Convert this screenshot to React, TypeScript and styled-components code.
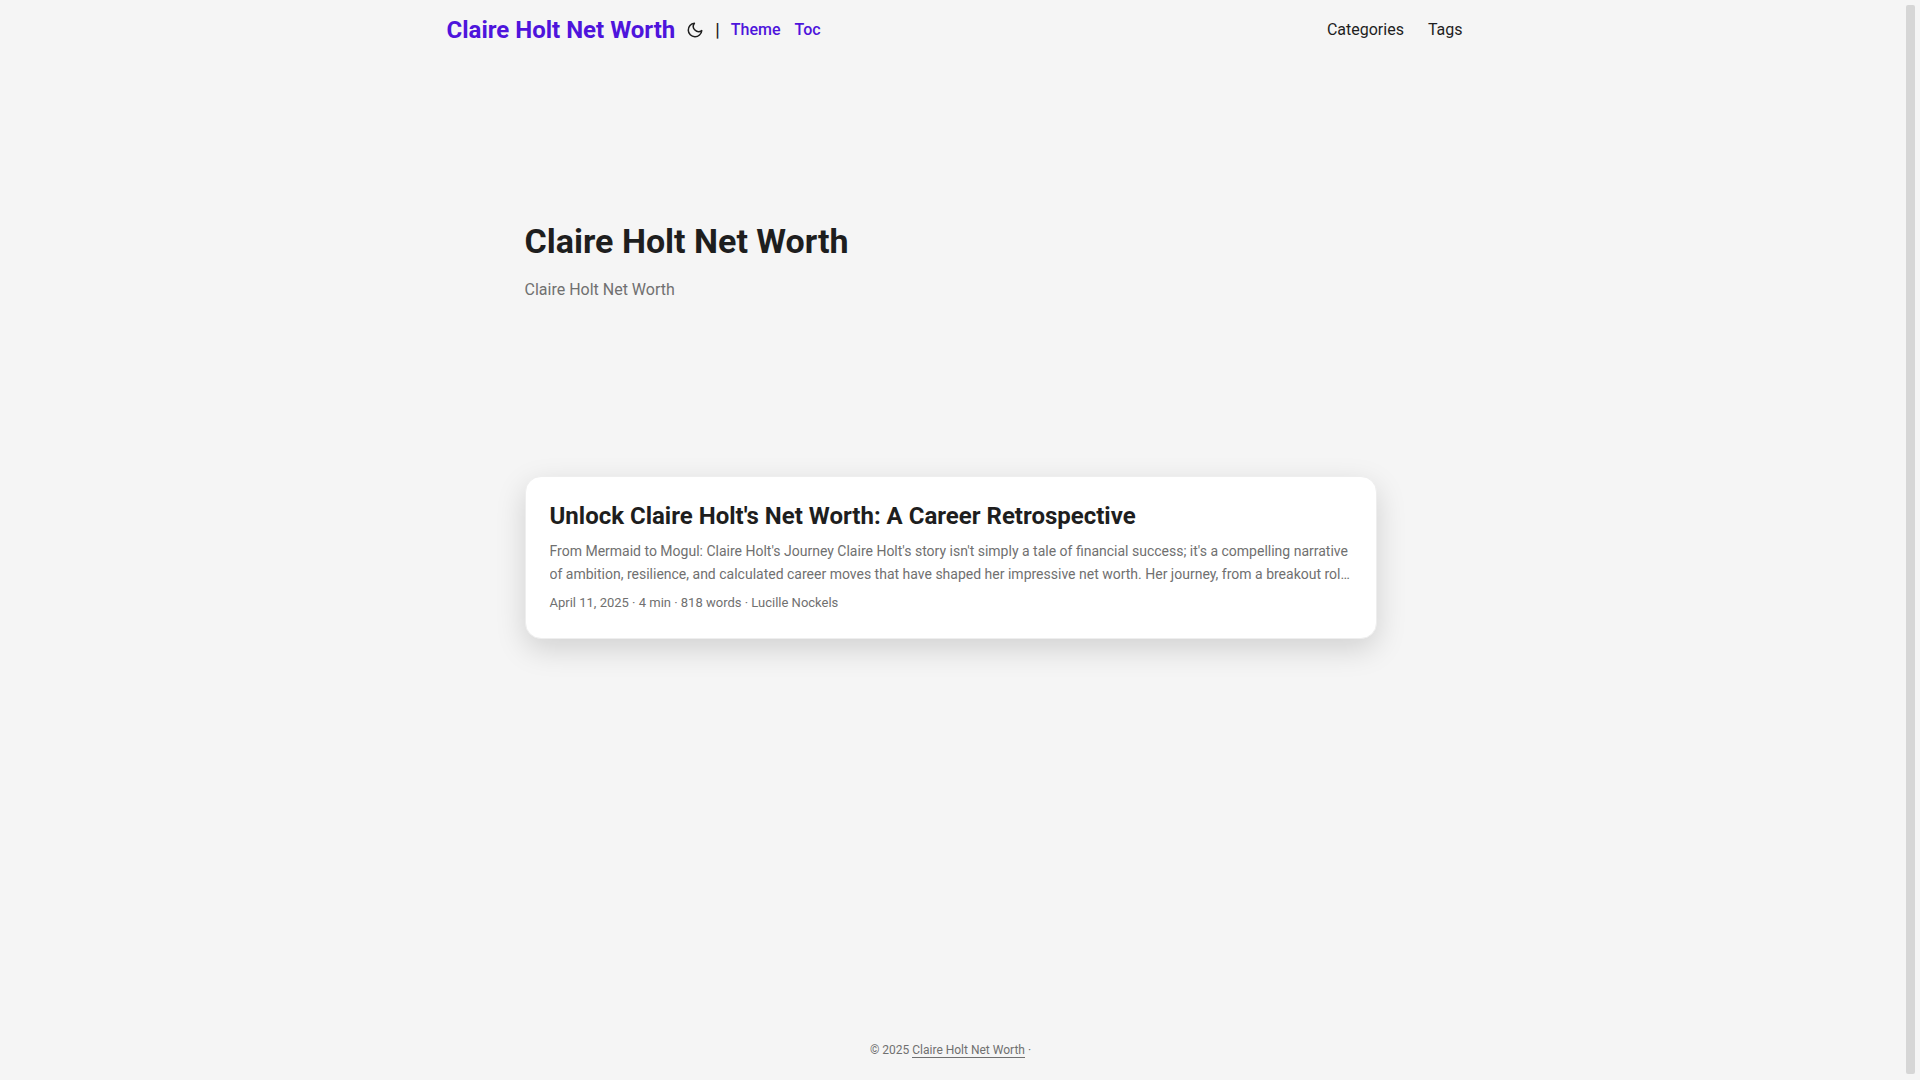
import React, { useState } from "react";
import styled, { createGlobalStyle } from "styled-components";

const accent = "#4e14dc";
const primary = "#1e1e1e";
const secondary = "#707070";

const GlobalStyle = createGlobalStyle`
  *, *::before, *::after { box-sizing: border-box; }
  body {
    margin: 0;
    background: #f5f5f5;
    color: ${primary};
    font-family: Roboto, "Liberation Sans", sans-serif;
    font-size: 16px;
    line-height: 26px;
    text-rendering: optimizeLegibility;
  }
  h1, h2, p, ul { margin: 0; padding: 0; }
  a { color: inherit; text-decoration: none; }
`;

const Shell = styled.div`
  display: grid;
  grid-template-columns: minmax(0, 1fr) 19px;
`;

const Page = styled.div`
  display: flex;
  flex-direction: column;
  min-height: 100vh;
`;

const ScrollTrack = styled.div`
  position: sticky;
  top: 0;
  display: flex;
  height: 100vh;
  padding: 5px 5px 6px;
`;

const ScrollThumb = styled.div`
  flex: 1;
  border-radius: 2px;
  background: #d6d6d6;
`;

const Nav = styled.nav`
  display: flex;
  justify-content: space-between;
  width: 100%;
  max-width: 1072px;
  margin: 0 auto;
  padding: 0 24px 0 32px;
  line-height: 60px;
`;

const Brand = styled.div`
  display: flex;
  align-items: center;
`;

const Logo = styled.a`
  color: ${accent};
  font-size: 24px;
  font-weight: 700;
`;

const ThemeToggle = styled.button`
  display: flex;
  margin: 0 11px;
  padding: 0;
  border: 0;
  background: none;
  color: ${primary};
  cursor: pointer;
`;

const Divider = styled.span`
  font-size: 18px;
  font-weight: 500;
`;

const Shortcuts = styled.ul`
  display: flex;
  gap: 14px;
  margin-left: 11px;
  list-style: none;
  color: ${accent};
  font-weight: 500;
`;

const Menu = styled.ul`
  display: flex;
  gap: 24px;
  list-style: none;
`;

const Main = styled.main`
  flex: 1;
  width: 100%;
  max-width: 900px;
  margin: 0 auto;
  padding: 24px;
`;

const Hero = styled.section`
  display: flex;
  flex-direction: column;
  justify-content: center;
  min-height: 320px;
  margin: 24px 0 48px;
`;

const HeroTitle = styled.h1`
  font-size: 34px;
  line-height: 44px;
`;

const HeroText = styled.p`
  padding: 14px 0;
  color: ${secondary};
`;

const Card = styled.article`
  padding: 24px;
  border: 1px solid #eeeeee;
  border-radius: 16px;
  background: #ffffff;
  box-shadow: 0 10px 30px rgba(0, 0, 0, 0.15);
`;

const CardTitle = styled.h2`
  font-size: 24px;
  line-height: 31px;
`;

const Excerpt = styled.p`
  display: -webkit-box;
  -webkit-box-orient: vertical;
  -webkit-line-clamp: 2;
  overflow: hidden;
  margin: 8px 0 6px;
  color: ${secondary};
  font-size: 14px;
  line-height: 23px;
`;

const Meta = styled.footer`
  color: ${secondary};
  font-size: 13px;
  line-height: 22px;
`;

const Footer = styled.footer`
  padding: 18px 24px;
  color: ${secondary};
  font-size: 12px;
  line-height: 24px;
  text-align: center;
`;

const FooterLink = styled.a`
  border-bottom: 1px solid ${secondary};
`;

const MoonIcon = () => (
  <svg width="18" height="18" viewBox="0 0 24 24" fill="none" stroke="currentColor" strokeWidth="2" strokeLinecap="round" strokeLinejoin="round" aria-hidden="true">
    <path d="M21 12.79A9 9 0 1 1 11.21 3 7 7 0 0 0 21 12.79z" />
  </svg>
);

export default function App() {
  const [dark, setDark] = useState(false);

  return (
    <Shell>
      <GlobalStyle />
      <Page>
        <header>
          <Nav>
            <Brand>
              <Logo href="#">Claire Holt Net Worth</Logo>
              <ThemeToggle type="button" aria-label="Toggle theme" aria-pressed={dark} onClick={() => setDark(!dark)}>
                <MoonIcon />
              </ThemeToggle>
              <Divider>|</Divider>
              <Shortcuts>
                <li><a href="#theme">Theme</a></li>
                <li><a href="#toc">Toc</a></li>
              </Shortcuts>
            </Brand>
            <Menu>
              <li><a href="#categories">Categories</a></li>
              <li><a href="#tags">Tags</a></li>
            </Menu>
          </Nav>
        </header>
        <Main>
          <Hero>
            <HeroTitle>Claire Holt Net Worth</HeroTitle>
            <HeroText>Claire Holt Net Worth</HeroText>
          </Hero>
          <Card>
            <CardTitle><a href="#post">Unlock Claire Holt's Net Worth: A Career Retrospective</a></CardTitle>
            <Excerpt>
              From Mermaid to Mogul: Claire Holt's Journey Claire Holt's story isn't simply a tale of financial success; it's a compelling narrative of ambition, resilience, and calculated career moves that have shaped her impressive net worth. Her journey, from a breakout rol…
            </Excerpt>
            <Meta>April 11, 2025 · 4 min · 818 words · Lucille Nockels</Meta>
          </Card>
        </Main>
        <Footer>
          © 2025 <FooterLink href="#">Claire Holt Net Worth</FooterLink> ·
        </Footer>
      </Page>
      <ScrollTrack aria-hidden="true"><ScrollThumb /></ScrollTrack>
    </Shell>
  );
}
